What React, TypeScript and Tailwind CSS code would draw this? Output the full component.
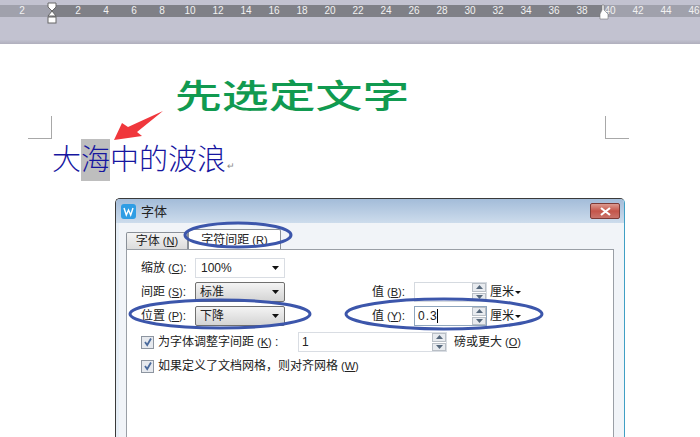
const rulerMarks = ['2', '', '2', '4', '6', '8', '10', '12', '14', '16', '18', '20', '22', '24', '26', '28', '30', '32', '34', '36', '38', '40', '42', '44', '46'];

const Key = ({ label, k, end = '' }: { label: string; k: string; end?: string }) => (
  <span className="whitespace-nowrap">
    {label}
    <span className="ml-[3px] text-[11px]">
      (<u>{k}</u>)
    </span>
    {end}
  </span>
);

const Combo = ({ value, plain = false }: { value: string; plain?: boolean }) => (
  <div
    className={
      plain
        ? 'flex h-[20px] w-[90px] items-center justify-between border border-[#d9dde3] bg-white pl-[5px] pr-[4px]'
        : 'flex h-[20px] w-[90px] items-center justify-between rounded-[2px] border border-[#70706f] bg-gradient-to-b from-[#f4f4f4] to-[#d4d4d4] pl-[4px] pr-[4px]'
    }
  >
    <span>{value}</span>
    <svg width="8" height="4" viewBox="0 0 8 4">
      <path d="M0 0h7L3.5 4z" fill="#111" />
    </svg>
  </div>
);

const Spinner = () => (
  <div className="flex h-full w-[14px] flex-col gap-px">
    <div className="flex flex-1 items-center justify-center border border-[#b9bfc6] bg-[#e8ebef]">
      <svg width="7" height="4" viewBox="0 0 7 4">
        <path d="M0 4h7L3.5 0z" fill="#56687c" />
      </svg>
    </div>
    <div className="flex flex-1 items-center justify-center border border-[#b9bfc6] bg-[#e8ebef]">
      <svg width="7" height="4" viewBox="0 0 7 4">
        <path d="M0 0h7L3.5 4z" fill="#56687c" />
      </svg>
    </div>
  </div>
);

const NumberBox = ({ value = '', active = false }: { value?: string; active?: boolean }) => (
  <div
    className={`flex h-[20px] w-[73px] items-center justify-between border bg-white pl-[3px] ${
      active ? 'border-[#8fa6bd]' : 'border-[#d5dae0]'
    }`}
  >
    <span className="tracking-[1px]">
      {value}
      {active && <span className="ml-[-1px] border-r border-black" />}
    </span>
    <Spinner />
  </div>
);

const Unit = () => (
  <span className="ml-[3px] flex items-center gap-px">
    厘米
    <svg width="6" height="3" viewBox="0 0 6 3">
      <path d="M0 0h6L3 3z" fill="#111" />
    </svg>
  </span>
);

const CheckBox = () => (
  <div className="flex h-[13px] w-[13px] items-center justify-center border border-[#8d95a0] bg-[#e6e9ee]">
    <svg width="10" height="10" viewBox="0 0 10 10">
      <path d="M2 5l2.2 3L8 1.5" fill="none" stroke="#4a6a9c" strokeWidth="1.8" />
    </svg>
  </div>
);

const Ellipse = ({ className, w, h }: { className: string; w: number; h: number }) => (
  <svg className={`absolute ${className}`} width={w} height={h} viewBox={`0 0 ${w} ${h}`}>
    <ellipse cx={w / 2} cy={h / 2} rx={w / 2 - 2} ry={h / 2 - 2} fill="none" stroke="#3c56ab" strokeWidth="3" />
  </svg>
);

const App = () => {
  return (
    <div className="relative h-[437px] w-[700px] overflow-hidden bg-white font-['Liberation_Sans','Noto_Sans_CJK_SC',sans-serif] text-[12px] leading-none text-[#222]">
      {/* ruler */}
      <div className="h-[44px] bg-gradient-to-b from-[#c2c2d0] from-90% to-[#b0afbd]">
        <div className="h-[5px]" />
        <div className="flex h-[12px] items-center bg-[linear-gradient(90deg,#a0a1ac_52px,#7f8087_52px,#7f8087_604px,#a0a1ac_604px)] pl-[8px] text-[10px] text-[#f2f2f2]">
          {rulerMarks.map((mark, i) => (
            <span key={i} className="w-[28px] shrink-0 text-center">
              {mark}
            </span>
          ))}
        </div>
      </div>

      {/* ruler handles */}
      <svg className="absolute left-[46px] top-[2px]" width="12" height="22" viewBox="0 0 12 22">
        <path d="M2 1h8v4L6 9 2 5zM6 9l4 5H2z" fill="#fff" stroke="#666" />
        <rect x="2" y="15" width="8" height="6" fill="#fff" stroke="#666" />
      </svg>
      <svg className="absolute left-[598px] top-[4px]" width="12" height="16" viewBox="0 0 12 16">
        <path d="M4 1h2v5l4 4v5H2v-5l2-4z" fill="#fff" stroke="#777" strokeWidth="0.6" />
      </svg>

      {/* page */}
      <div className="ml-[175px] mt-[35px] h-[35px] w-[238px] origin-left scale-x-[1.42] text-[33px] font-medium leading-[35px] whitespace-nowrap text-[#119a50]">
        先选定文字
      </div>

      <div className="ml-[28px] mt-[2px] flex h-[23px] w-[601px] justify-between">
        <div className="h-full w-[24px] border-b border-r border-[#a8a8a8]" />
        <div className="h-full w-[24px] border-b border-l border-[#a8a8a8]" />
      </div>

      <div className="ml-[52px] flex h-[42px] items-center text-[29px] font-light text-[#16169f]">
        <span>大</span>
        <span className="flex h-full items-center bg-[#bebebe]">海</span>
        <span>中的波浪</span>
        <span className="ml-px mt-[12px] text-[9px] text-[#888]">↵</span>
      </div>

      {/* dialog */}
      <div className="ml-[115px] mt-[17px] h-[240px] w-[510px] overflow-hidden rounded-t-[5px] border border-b-0 border-[#3a3a3a] border-r-[#3f9fc4]">
        <div className="flex h-[24px] items-center justify-between bg-gradient-to-b from-[#a3bcd9] to-[#cddcec] pl-[5px] pr-[4px]">
          <div className="flex items-center gap-[5px]">
            <svg width="15" height="15" viewBox="0 0 15 15">
              <rect width="15" height="15" rx="3" fill="#2f9de4" />
              <path d="M3 4l2.3 7L7.5 6l2.2 5L12 4" fill="none" stroke="#fff" strokeWidth="1.4" />
            </svg>
            <span className="text-[13px]">字体</span>
          </div>
          <div className="flex h-[16px] w-[30px] items-center justify-center rounded-[2px] border border-[#7d3a36] bg-gradient-to-b from-[#dc9a90] via-[#c4554a] to-[#c9736a]">
            <svg width="11" height="9" viewBox="0 0 11 9">
              <path d="M1 1l9 7M10 1L1 8" stroke="#fff" strokeWidth="2.2" />
            </svg>
          </div>
        </div>

        <div className="h-full border-l-[3px] border-[#e6eef6] bg-[#f1f4f8] pl-[7px] pr-[10px]">
          <div className="flex h-[26px] items-end pt-[6px]">
            <div className="flex h-[17px] w-[62px] items-center justify-center rounded-t-[2px] border border-b-0 border-[#8a9098] bg-gradient-to-b from-[#f4f4f4] to-[#dcdcdc]">
              <Key label="字体" k="N" />
            </div>
            <div className="flex h-[20px] w-[93px] items-center justify-center rounded-t-[2px] border border-b-0 border-[#8a9098] bg-white">
              <Key label="字符间距" k="R" />
            </div>
          </div>

          <div className="h-full border border-[#9a9fa6] bg-white pl-[14px] pt-[8px]">
            <div className="flex h-[20px] items-center">
              <span className="w-[54px]">
                <Key label="缩放" k="C" end=":" />
              </span>
              <Combo value="100%" plain />
            </div>

            <div className="mt-[4px] flex h-[20px] items-center">
              <span className="w-[54px]">
                <Key label="间距" k="S" end=":" />
              </span>
              <Combo value="标准" />
              <span className="ml-[87px] w-[42px]">
                <Key label="值" k="B" end=":" />
              </span>
              <NumberBox />
              <Unit />
            </div>

            <div className="mt-[4px] flex h-[20px] items-center">
              <span className="w-[54px]">
                <Key label="位置" k="P" end=":" />
              </span>
              <Combo value="下降" />
              <span className="ml-[87px] w-[42px]">
                <Key label="值" k="Y" end=":" />
              </span>
              <NumberBox value="0.3" active />
              <Unit />
            </div>

            <div className="mt-[6px] flex h-[20px] items-center">
              <CheckBox />
              <span className="ml-[4px] w-[140px]">
                <Key label="为字体调整字间距" k="K" end=" :" />
              </span>
              <div className="flex h-[20px] w-[149px] items-center justify-between border border-[#d9dde3] bg-white pl-[3px]">
                <span>1</span>
                <Spinner />
              </div>
              <span className="ml-[7px]">
                <Key label="磅或更大" k="O" />
              </span>
            </div>

            <div className="mt-[4px] flex h-[20px] items-center">
              <CheckBox />
              <span className="ml-[4px]">
                <Key label="如果定义了文档网格，则对齐网格" k="W" />
              </span>
            </div>
          </div>
        </div>
      </div>

      {/* annotations */}
      <svg className="absolute left-[110px] top-[108px]" width="56" height="34" viewBox="0 0 56 34">
        <path d="M4 32l8-17 6 4L53 3 27 24l5 4z" fill="#f0373c" />
      </svg>
      <Ellipse className="left-[183px] top-[221px]" w={110} h={28} />
      <Ellipse className="left-[128px] top-[298px]" w={184} h={32} />
      <Ellipse className="left-[344px] top-[297px]" w={200} h={34} />
    </div>
  );
};

export default App;
